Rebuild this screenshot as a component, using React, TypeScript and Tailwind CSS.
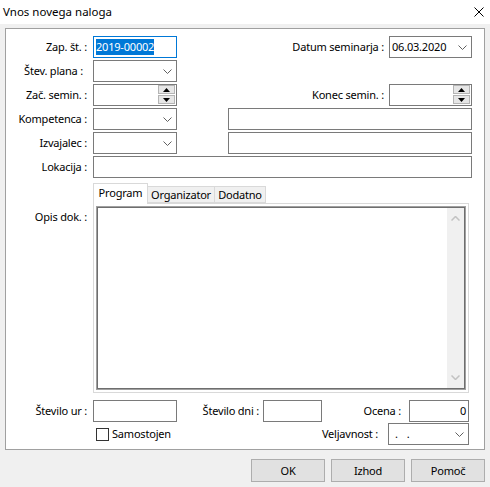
import React from "react";

function Chevron() {
  return (
    <svg width="9" height="5" viewBox="0 0 9 5" className="shrink-0">
      <polyline points="0.5,0.5 4.5,4.5 8.5,0.5" fill="none" stroke="#606060" strokeWidth="1" />
    </svg>
  );
}

function Dropdown({ className = "", children }: { className?: string; children?: React.ReactNode }) {
  return (
    <div className={`h-[22px] border border-[#7a7a7a] bg-white flex items-center justify-between pl-[2px] pr-[4px] shrink-0 ${className}`}>
      <span className="flex">{children}</span>
      <Chevron />
    </div>
  );
}

function Tri({ up }: { up: boolean }) {
  return (
    <svg width="7" height="4" viewBox="0 0 7 4">
      <polygon points={up ? "3.5,0 7,4 0,4" : "0,0 7,0 3.5,4"} fill="#000" />
    </svg>
  );
}

function Spin({ className = "" }: { className?: string }) {
  return (
    <div className={`h-[22px] border border-[#7a7a7a] bg-white flex justify-end pr-[1px] shrink-0 ${className}`}>
      <div className="flex flex-col w-[17px] gap-[1px]">
        <div className="h-[9px] bg-[#e6e6e6] border border-[#b4b4b4] flex items-center justify-center">
          <Tri up />
        </div>
        <div className="h-[9px] bg-[#e6e6e6] border border-[#b4b4b4] flex items-center justify-center">
          <Tri up={false} />
        </div>
      </div>
    </div>
  );
}

function Box({ className = "", children }: { className?: string; children?: React.ReactNode }) {
  return (
    <div className={`h-[22px] border border-[#7a7a7a] bg-white flex items-center px-[2px] shrink-0 ${className}`}>
      {children}
    </div>
  );
}

function Label({ children, className = "" }: { children: React.ReactNode; className?: string }) {
  return <div className={`w-[81px] shrink-0 text-right whitespace-nowrap ${className}`}>{children}</div>;
}

function ScrollChevron({ up }: { up: boolean }) {
  return (
    <svg width="9" height="5" viewBox="0 0 9 5">
      <polyline
        points={up ? "0.5,4.5 4.5,0.5 8.5,4.5" : "0.5,0.5 4.5,4.5 8.5,0.5"}
        fill="none"
        stroke="#c2c2c2"
        strokeWidth="1.5"
      />
    </svg>
  );
}

export default function App() {
  return (
    <div className="w-[490px] h-[487px] bg-[#f0f0f0] flex flex-col font-['Noto_Sans',sans-serif] text-[11px] tracking-[-0.2px] leading-[16px] text-black overflow-hidden">
      {/* title bar */}
      <div className="h-[24px] bg-white flex items-center justify-between pl-[3px] pr-[6px] shrink-0">
        <span className="text-[11.5px] tracking-normal">Vnos novega naloga</span>
        <svg width="10" height="10" viewBox="0 0 10 10">
          <path d="M0.5 0.5 L9.5 9.5 M9.5 0.5 L0.5 9.5" stroke="#000" strokeWidth="1" />
        </svg>
      </div>

      <div className="pt-[4px] px-[5px] flex flex-col">
        {/* main panel */}
        <div className="border border-[#a0a0a0] bg-white pt-[7px] pr-[12px] pb-[4px] flex flex-col gap-[2px]">
          <div className="flex items-center">
            <Label>Zap. št. :</Label>
            <Box className="ml-[6px] w-[84px] border-[#0078d7]">
              <span className="bg-[#0078d7] text-white">2019-00002</span>
            </Box>
            <div className="flex-1" />
            <span>Datum seminarja :</span>
            <Dropdown className="ml-[5px] w-[83px]">06.03.2020</Dropdown>
          </div>
          <div className="flex items-center">
            <Label className="pr-[4px]">Štev. plana :</Label>
            <Dropdown className="ml-[6px] w-[84px]" />
          </div>
          <div className="flex items-center">
            <Label>Zač. semin. :</Label>
            <Spin className="ml-[6px] w-[84px]" />
            <div className="flex-1" />
            <span>Konec semin. :</span>
            <Spin className="ml-[5px] w-[83px]" />
          </div>
          <div className="flex items-center">
            <Label>Kompetenca :</Label>
            <Dropdown className="ml-[6px] w-[84px]" />
            <Box className="ml-[51px] flex-1" />
          </div>
          <div className="flex items-center">
            <Label>Izvajalec :</Label>
            <Dropdown className="ml-[6px] w-[84px]" />
            <Box className="ml-[51px] flex-1" />
          </div>
          <div className="flex items-center">
            <Label>Lokacija :</Label>
            <Box className="ml-[6px] flex-1" />
          </div>

          {/* tabbed description */}
          <div className="flex mt-[3px]">
            <Label className="pt-[26px]">Opis dok. :</Label>
            <div className="ml-[6px] w-[376px] flex flex-col">
              <div className="flex items-end h-[20px]">
                <div className="h-[21px] w-[55px] bg-white border border-b-0 border-[#d9d9d9] flex items-center justify-center pb-[2px] relative z-10 mb-[-1px]">
                  Program
                </div>
                <div className="h-[17px] w-[67px] bg-[#f0f0f0] border border-l-0 border-[#d9d9d9] flex items-center justify-center">
                  Organizator
                </div>
                <div className="h-[17px] w-[51px] bg-[#f0f0f0] border border-l-0 border-[#d9d9d9] flex items-center justify-center">
                  Dodatno
                </div>
              </div>
              <div className="h-[190px] border border-[#d9d9d9] bg-white p-[2px]">
                <div className="h-full border border-[#a0a0a0] flex">
                  <div className="flex-1 border border-[#6e6e6e] border-r-0 flex justify-end">
                    <div className="w-[17px] bg-[#f0f0f0] flex flex-col items-center justify-between py-[8px]">
                      <ScrollChevron up />
                      <ScrollChevron up={false} />
                    </div>
                  </div>
                  <div className="w-[1px] bg-[#6e6e6e]" />
                </div>
              </div>
            </div>
          </div>

          {/* numbers */}
          <div className="flex items-center mt-[5px]">
            <Label>Število ur :</Label>
            <Box className="ml-[6px] w-[84px]" />
            <div className="w-[82px] text-right whitespace-nowrap">Število dni :</div>
            <Box className="ml-[4px] w-[59px]" />
            <div className="w-[79px] text-right whitespace-nowrap">Ocena :</div>
            <Box className="ml-[8px] w-[60px] justify-end">
              <span>0</span>
            </Box>
          </div>
          <div className="flex items-center mt-[-1px]">
            <div className="ml-[90px] w-[13px] h-[13px] border border-[#333] bg-white shrink-0" />
            <span className="ml-[3px]">Samostojen</span>
            <div className="flex-1" />
            <span>Veljavnost :</span>
            <Dropdown className="ml-[10px] w-[81px] mr-[3px]">
              <span className="ml-[4px]">.</span>
              <span className="ml-[9px]">.</span>
            </Dropdown>
          </div>
        </div>

        {/* buttons */}
        <div className="flex justify-end gap-[6px] mt-[9px]">
          {["OK", "Izhod", "Pomoč"].map((t) => (
            <div
              key={t}
              className="w-[74px] h-[23px] bg-[#e1e1e1] border border-[#adadad] flex items-center justify-center"
            >
              {t}
            </div>
          ))}
        </div>
      </div>
    </div>
  );
}
